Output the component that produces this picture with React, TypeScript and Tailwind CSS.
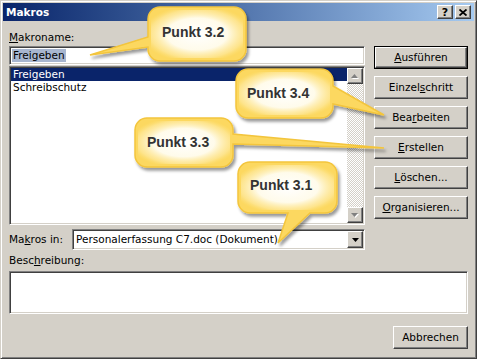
import React from "react";

function U({ children }: { children: React.ReactNode }) {
  return <span className="underline decoration-1 underline-offset-[1px]">{children}</span>;
}

function Raised({ children, className = "" }: { children: React.ReactNode; className?: string }) {
  return (
    <div
      className={`flex items-center justify-center bg-[#d4d0c8] border border-t-white border-l-white border-r-[#404040] border-b-[#404040] shadow-[inset_-1px_-1px_#808080] ${className}`}
    >
      {children}
    </div>
  );
}

function Btn({ children, isDefault }: { children: React.ReactNode; isDefault?: boolean }) {
  if (isDefault) {
    return (
      <div className="h-[23px] w-[94px] border border-black">
        <Raised className="h-full w-full">{children}</Raised>
      </div>
    );
  }
  return <Raised className="h-[23px] w-[94px]">{children}</Raised>;
}

const sunken =
  "border border-t-[#808080] border-l-[#808080] border-r-white border-b-white shadow-[inset_1px_1px_#404040,inset_-1px_-1px_#d4d0c8] bg-white";

function GrayArrow({ down }: { down?: boolean }) {
  return (
    <svg width="8" height="5" viewBox="0 0 8 5">
      {down ? (
        <>
          <polygon points="1,1 8,1 4.5,5" fill="#fff" />
          <polygon points="0,0 7,0 3.5,4" fill="#808080" />
        </>
      ) : (
        <>
          <polygon points="4.5,1 8,5 1,5" fill="#fff" />
          <polygon points="3.5,0 7,4 0,4" fill="#808080" />
        </>
      )}
    </svg>
  );
}

const callouts = [
  {
    id: "c32",
    d: "M160,7 H234 A12,12 0 0 1 246,19 V49 A12,12 0 0 1 234,61 H160 A12,12 0 0 1 148,49 V47 L90,55 L148,37 V19 A12,12 0 0 1 160,7 Z",
    x: 148, y: 7, w: 98, h: 54,
  },
  {
    id: "c34",
    d: "M248,69 H321 A12,12 0 0 1 333,81 V86 L384,115 L333,104 V106 A12,12 0 0 1 321,118 H248 A12,12 0 0 1 236,106 V81 A12,12 0 0 1 248,69 Z",
    x: 236, y: 69, w: 97, h: 49,
  },
  {
    id: "c33",
    d: "M147,118 H221 A12,12 0 0 1 233,130 V134 L384,148 L233,144 V155 A12,12 0 0 1 221,167 H147 A12,12 0 0 1 135,155 V130 A12,12 0 0 1 147,118 Z",
    x: 135, y: 118, w: 98, h: 49,
  },
  {
    id: "c31",
    d: "M250,162 H325 A12,12 0 0 1 337,174 V201 A12,12 0 0 1 325,213 H310 L278,243 L288,213 H250 A12,12 0 0 1 238,201 V174 A12,12 0 0 1 250,162 Z",
    x: 238, y: 162, w: 99, h: 51,
  },
];

function Callouts() {
  return (
    <div className="pointer-events-none absolute inset-0">
      <svg width="477" height="359" className="absolute left-0 top-0">
        <defs>
          <filter id="shadow" x="-20%" y="-20%" width="150%" height="160%">
            <feDropShadow dx="2" dy="3" stdDeviation="1.8" floodColor="#000" floodOpacity="0.4" />
          </filter>
          <radialGradient id="glow" cx="0.5" cy="0.5" r="0.6">
            <stop offset="0" stopColor="#ffffff" stopOpacity="1" />
            <stop offset="0.55" stopColor="#fffdf2" stopOpacity="0.95" />
            <stop offset="0.85" stopColor="#fff0b8" stopOpacity="0.5" />
            <stop offset="1" stopColor="#fde68a" stopOpacity="0" />
          </radialGradient>
        </defs>
        {callouts.map((c) => (
          <g key={c.id}>
            <path d={c.d} fill="#fcd860" stroke="#f3c53c" strokeWidth="1.5" filter="url(#shadow)" />
            <rect x={c.x + 3} y={c.y + 3} width={c.w - 6} height={c.h - 6} rx="10" fill="url(#glow)" />
          </g>
        ))}
      </svg>
      <div className="absolute left-[162px] top-[25px] font-['Liberation_Sans',Arial,sans-serif] text-[14px] leading-[14px] font-bold text-[#333]">Punkt 3.2</div>
      <div className="absolute left-[247px] top-[86px] font-['Liberation_Sans',Arial,sans-serif] text-[14px] leading-[14px] font-bold text-[#333]">Punkt 3.4</div>
      <div className="absolute left-[147px] top-[135px] font-['Liberation_Sans',Arial,sans-serif] text-[14px] leading-[14px] font-bold text-[#333]">Punkt 3.3</div>
      <div className="absolute left-[250px] top-[178px] font-['Liberation_Sans',Arial,sans-serif] text-[14px] leading-[14px] font-bold text-[#333]">Punkt 3.1</div>
    </div>
  );
}

export default function App() {
  return (
    <div className="relative h-[359px] w-[477px] font-['DejaVu_Sans',sans-serif] text-[10.5px] leading-[13px] text-black">
      <div className="h-full w-full bg-[#d4d0c8] border border-t-[#d4d0c8] border-l-[#d4d0c8] border-r-[#404040] border-b-[#404040] shadow-[inset_1px_1px_#fff,inset_-1px_-1px_#808080] p-[2px]">
        {/* title bar */}
        <div className="flex h-[18px] items-center justify-between bg-linear-to-r from-[#0a246a] to-[#a6caf0] pl-[3px] pr-[3px]">
          <span className="font-bold text-white">Makros</span>
          <div className="flex gap-[2px]">
            <Raised className="h-[14px] w-[16px] font-bold text-[11px] leading-none">?</Raised>
            <Raised className="h-[14px] w-[16px]">
              <svg width="8" height="7" viewBox="0 0 8 7">
                <path d="M0.5 0.5L7.5 6.5M7.5 0.5L0.5 6.5" stroke="#000" strokeWidth="1.8" />
              </svg>
            </Raised>
          </div>
        </div>

        <div className="flex flex-col px-[6px]">
          <div className="flex gap-[9px]">
            {/* left column */}
            <div className="flex w-[356px] flex-col pt-[10px]">
              <div className="h-[13px]">
                <U>M</U>akroname:
              </div>
              <div className={`mt-[2px] flex h-[19px] items-center px-[2px] ${sunken}`}>
                <span className="bg-[#a8b6cf] px-[1px]">Freigeben</span>
              </div>
              <div className={`mt-[1px] flex h-[159px] ${sunken} p-[1px]`}>
                <div className="flex flex-1 flex-col">
                  <div className="h-[13px] bg-[#0a246a] pl-[2px] text-white">Freigeben</div>
                  <div className="h-[13px] pl-[2px]">Schreibschutz</div>
                </div>
                <div className="flex w-[16px] flex-col">
                  <Raised className="h-[16px] w-[16px]">
                    <GrayArrow />
                  </Raised>
                  <div className="flex-1 bg-[image:repeating-conic-gradient(#ffffff_0%_25%,#d4d0c8_0%_50%)] bg-[length:2px_2px]" />
                  <Raised className="h-[16px] w-[16px]">
                    <GrayArrow down />
                  </Raised>
                </div>
              </div>
              <div className="mt-[4px] flex h-[21px] items-center">
                <div className="w-[63px]">
                  Ma<U>k</U>ros in:
                </div>
                <div className={`flex h-[21px] w-[293px] items-center ${sunken} p-[1px]`}>
                  <div className="flex-1 pl-[2px]">Personalerfassung C7.doc (Dokument)</div>
                  <Raised className="h-[17px] w-[16px]">
                    <svg width="7" height="4" viewBox="0 0 7 4">
                      <polygon points="0,0 7,0 3.5,4" fill="#000" />
                    </svg>
                  </Raised>
                </div>
              </div>
            </div>

            {/* right column */}
            <div className="flex w-[94px] flex-col gap-[7px] pt-[25px]">
              <Btn isDefault>
                <U>A</U>usführen
              </Btn>
              <Btn>
                Einzel<U>s</U>chritt
              </Btn>
              <Btn>
                Bea<U>r</U>beiten
              </Btn>
              <Btn>
                <U>E</U>rstellen
              </Btn>
              <Btn>
                <U>L</U>öschen...
              </Btn>
              <Btn>
                <U>O</U>rganisieren...
              </Btn>
            </div>
          </div>

          <div className="mt-[4px] h-[13px]">
            Besc<U>h</U>reibung:
          </div>
          <div className={`mt-[4px] h-[43px] w-full ${sunken}`} />
          <div className="mt-[12px] flex justify-end">
            <Raised className="h-[23px] w-[75px]">Abbrechen</Raised>
          </div>
        </div>
      </div>
      <Callouts />
    </div>
  );
}
